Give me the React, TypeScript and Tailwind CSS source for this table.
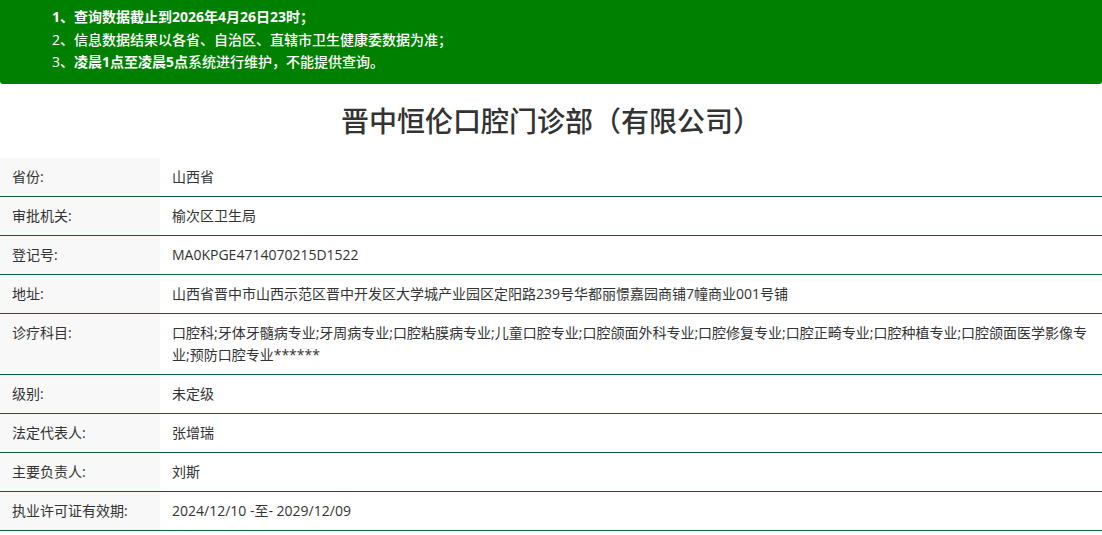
const rows: { label: string; value: string }[] = [
  { label: "省份:", value: "山西省" },
  { label: "审批机关:", value: "榆次区卫生局" },
  { label: "登记号:", value: "MA0KPGE4714070215D1522" },
  { label: "地址:", value: "山西省晋中市山西示范区晋中开发区大学城产业园区定阳路239号华都丽憬嘉园商铺7幢商业001号铺" },
  {
    label: "诊疗科目:",
    value:
      "口腔科;牙体牙髓病专业;牙周病专业;口腔粘膜病专业;儿童口腔专业;口腔颌面外科专业;口腔修复专业;口腔正畸专业;口腔种植专业;口腔颌面医学影像专业;预防口腔专业******",
  },
  { label: "级别:", value: "未定级" },
  { label: "法定代表人:", value: "张增瑞" },
  { label: "主要负责人:", value: "刘斯" },
  { label: "执业许可证有效期:", value: "2024/12/10 -至- 2029/12/09" },
];

export default function App() {
  return (
    <div className="min-h-[535px] bg-white font-['Open_Sans','Noto_Sans_CJK_SC',sans-serif] text-[14px] text-[#333]">
      <div className="h-[84px] rounded-b-[3px] bg-[#008000] pl-[52px] pt-[6px] text-[14px] leading-[22.5px] text-white">
        <p className="font-bold">1、查询数据截止到2026年4月26日23时；</p>
        <p className="font-medium">2、信息数据结果以各省、自治区、直辖市卫生健康委数据为准；</p>
        <p className="font-medium">
          3、<span className="font-bold">凌晨1点至凌晨5点</span>系统进行维护，不能提供查询。
        </p>
      </div>

      <h1 className="flex h-[74px] items-center justify-center text-[28px] font-medium text-[#333]">晋中恒伦口腔门诊部（有限公司）</h1>

      <div>
        {rows.map((r) => (
          <div key={r.label} className="flex border-b border-[#0b5e2e]">
            <div className="w-[160px] shrink-0 bg-[#f8f8f8] py-2 pl-3 leading-[22px]">{r.label}</div>
            <div className="flex-1 break-all py-2 pl-3 pr-[13px] leading-[22px]">{r.value}</div>
          </div>
        ))}
      </div>
    </div>
  );
}
